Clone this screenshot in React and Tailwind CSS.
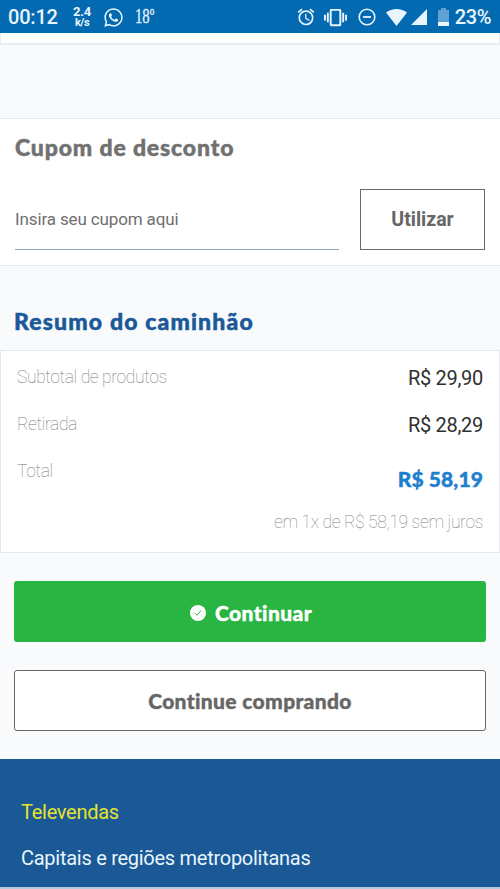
import { FaWhatsapp } from 'react-icons/fa'
import { MdAlarm, MdVibration } from 'react-icons/md'

const rows = [
  { label: 'Subtotal de produtos', value: 'R$ 29,90' },
  { label: 'Retirada', value: 'R$ 28,29' },
]

const StatusBar = () => {
  return (
    <header className="flex h-[33px] items-center bg-[#036ab2] pt-px pl-2 pr-[9px] text-[#e9f5fc]">
      <span className="w-[65px] text-[20px] font-medium tracking-[-0.2px]">
        00:12
      </span>
      <div className="flex w-[18px] flex-col items-center font-bold">
        <span className="text-[13px] leading-[11px] tracking-[-0.2px]">
          2.4
        </span>
        <span className="text-[11px] leading-[11px] tracking-[-0.5px]">
          k/s
        </span>
      </div>
      <FaWhatsapp size={21} className="ml-[12px]" />
      <span className="ml-[11px] w-[18px] origin-left scale-x-[0.7] whitespace-nowrap font-['Liberation_Serif',serif] text-[21px] [-webkit-text-stroke:0.3px]">
        18º
      </span>

      <div className="ml-auto flex items-center">
        <MdAlarm size={20} />
        <MdVibration size={23} className="ml-[8px]" />
        <svg
          width="18"
          height="18"
          viewBox="0 0 18 18"
          fill="none"
          stroke="currentColor"
          className="ml-[11px]"
        >
          <circle cx="9" cy="9" r="7.8" strokeWidth="1.6" />
          <path d="M5 9h8" strokeWidth="1.8" />
        </svg>
        <svg
          width="21"
          height="17"
          viewBox="0 0 21 17"
          fill="currentColor"
          className="ml-[10px]"
        >
          <path d="M0 3.600C6-1.200 15-1.200 21 3.600L10.500 17Z" />
        </svg>
        <svg
          width="16"
          height="16"
          viewBox="0 0 16 16"
          fill="currentColor"
          className="ml-1"
        >
          <path d="M16 0v16H0Z" />
        </svg>
        <svg width="11" height="18" viewBox="0 0 11 18" className="ml-[11px]">
          <path d="M3 0h5v2h3v12H0V2h3Z" fill="#5fa1d0" />
          <path d="M0 14h11v4H0Z" fill="currentColor" />
        </svg>
        <span className="ml-[6px] text-[20px] font-medium tracking-[-0.4px]">
          23%
        </span>
      </div>
    </header>
  )
}

const App = () => {
  return (
    <div className="flex h-[889px] w-[500px] flex-col overflow-hidden bg-[#f8fafc] font-['Roboto',sans-serif]">
      <StatusBar />
      <div className="h-3 border-x border-b-2 border-[#e5edf2] bg-white" />

      <section className="mt-[73px] h-[148px] border-y border-[#e6ebef] bg-white px-[15px]">
        <h2 className="mt-[12px] font-['Lato',sans-serif] text-[23px] leading-8 font-black tracking-[0.85px] text-[#717171] [-webkit-text-stroke:0.5px]">
          Cupom de desconto
        </h2>
        <div className="mt-[26px] flex justify-between">
          <input
            type="text"
            placeholder="Insira seu cupom aqui"
            className="h-[61px] w-[324px] border-b border-[#97a8b5] text-[17px] tracking-[-0.13px] text-[#6f6f6f] placeholder:text-[#6f6f6f]"
          />
          <button className="h-[61px] w-[125px] border border-[#6b6b6b] text-[19.5px] font-bold text-[#666]">
            Utilizar
          </button>
        </div>
      </section>

      <h2 className="mt-[39px] ml-[14px] font-['Lato',sans-serif] text-[23px] leading-8 font-black tracking-[1.15px] text-[#1a5898] [-webkit-text-stroke:0.5px]">
        Resumo do caminhão
      </h2>

      <section className="mt-[13px] h-[203px] border border-[#e3e8ee] bg-white px-4 pt-[3px]">
        {rows.map((row) => (
          <div
            key={row.label}
            className="flex h-[47px] items-center justify-between"
          >
            <span className="text-[17.5px] font-thin tracking-[-0.38px] text-[#777]">
              {row.label}
            </span>
            <span className="text-[20px] tracking-[-0.3px] text-[#303030]">
              {row.value}
            </span>
          </div>
        ))}
        <div className="flex h-[54px] justify-between">
          <span className="mt-[9px] text-[17.5px] leading-7 font-thin tracking-[-0.38px] text-[#777]">
            Total
          </span>
          <span className="mt-[17px] font-['Lato',sans-serif] text-[21px] leading-7 font-black tracking-[0.1px] text-[#1d7fcd] [-webkit-text-stroke:0.4px]">
            R$ 58,19
          </span>
        </div>
        <p className="mt-[6px] text-right text-[17.5px] leading-7 font-thin tracking-[-0.38px] text-[#808080]">
          em 1x de R$ 58,19 sem juros
        </p>
      </section>

      <div className="mt-[28px] flex flex-col gap-7 px-[14px] font-['Lato',sans-serif] text-[21px] font-black [-webkit-text-stroke:0.4px]">
        <button className="flex h-[61px] items-center justify-center gap-[9px] rounded-[3px] bg-[#2ab543] pt-[3px] pl-[2px] tracking-[0.4px] text-white">
          <svg width="16" height="16" viewBox="0 0 16 16">
            <circle cx="8" cy="8" r="8" fill="#fff" />
            <path
              d="m5 8.300 2 2 4-4.800"
              fill="none"
              stroke="#2ab543"
              strokeWidth="1"
            />
          </svg>
          Continuar
        </button>
        <button className="h-[61px] rounded-[3px] border border-[#666] bg-white tracking-[0.35px] text-[#666]">
          Continue comprando
        </button>
      </div>

      <footer className="mt-[28px] h-[128px] shrink-0 bg-[#1a5996] px-[21px] pt-[39px] text-[20px] leading-7 tracking-[-0.27px]">
        <h3 className="text-[#e6e22e]">Televendas</h3>
        <p className="mt-[18px] text-[#e8f5fd]">
          Capitais e regiões metropolitanas
        </p>
      </footer>
      <div className="h-[2px] shrink-0 bg-[#b4cbe0]" />
    </div>
  )
}

export default App
